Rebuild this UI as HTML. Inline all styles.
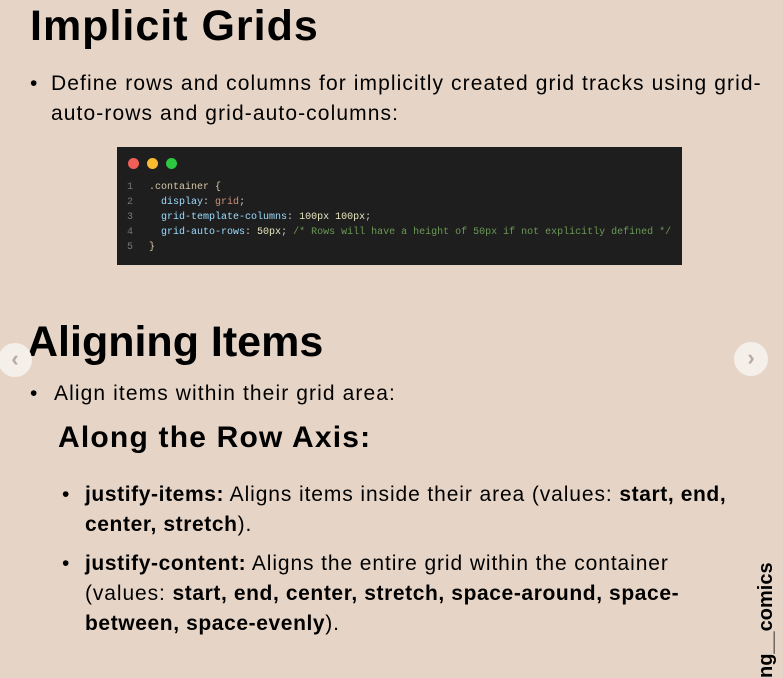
<!DOCTYPE html>
<html><head><meta charset="utf-8"><style>
body{margin:0;width:783px;height:676px;background:#e6d5c7;position:relative;overflow:hidden;font-family:"Liberation Sans",sans-serif;color:#000}
.a{position:absolute;white-space:nowrap}
h1{position:absolute;margin:0;font-size:43px;font-weight:bold}
.t{font-size:21px;line-height:30px;letter-spacing:1.1px}
.t b{letter-spacing:0.6px}
.code{position:absolute;left:117px;top:147px;width:565px;height:118px;background:#1e1e1e;font-family:"Liberation Mono",monospace;font-size:10px;color:#ccc;}
.code .l{position:absolute;left:10px;white-space:pre;line-height:15px}
.n{color:#777;display:inline-block;width:22px}
.btn{position:absolute;width:34px;height:34px;border-radius:50%;background:#f5efea;color:#b9aa9d;font-size:22px;text-align:center;line-height:32px;font-weight:bold}
</style></head><body>
<h1 style="left:30px;top:2px;letter-spacing:1px">Implicit Grids</h1>
<div class="a t" style="left:30px;top:69px">•</div>
<div class="a t" style="left:51px;top:69px">Define rows and columns for implicitly created grid tracks using grid-<br>auto-rows and grid-auto-columns:</div>
<div class="code">
<div style="position:absolute;left:11px;top:11px;width:11px;height:11px;border-radius:50%;background:#f25f58"></div>
<div style="position:absolute;left:30px;top:11px;width:11px;height:11px;border-radius:50%;background:#f9bc2e"></div>
<div style="position:absolute;left:49px;top:11px;width:11px;height:11px;border-radius:50%;background:#2bc840"></div>
<div class="l" style="top:33px"><span class="n">1</span><span style="color:#d7c8a8">.container {</span>
<span class="n">2</span>  <span style="color:#9cdcfe">display</span>: <span style="color:#ce9178">grid</span>;
<span class="n">3</span>  <span style="color:#9cdcfe">grid-template-columns</span>: <span style="color:#e8e8c0">100px 100px</span>;
<span class="n">4</span>  <span style="color:#9cdcfe">grid-auto-rows</span>: <span style="color:#e8e8c0">50px</span>; <span style="color:#6a9955">/* Rows will have a height of 50px if not explicitly defined */</span>
<span class="n">5</span><span style="color:#d7c8a8">}</span></div>
</div>
<h1 style="left:27px;top:318px">Aligning Items</h1>
<div class="a t" style="left:30px;top:379px">•</div>
<div class="a t" style="left:54px;top:379px">Align items within their grid area:</div>
<div class="a" style="left:58px;top:421px;font-size:30px;font-weight:bold;letter-spacing:1.2px">Along the Row Axis:</div>
<div class="a t" style="left:62px;top:480px">•</div>
<div class="a t" style="left:85px;top:480px;letter-spacing:0.9px"><b>justify-items:</b> Aligns items inside their area (values: <b>start, end,</b><br><b>center, stretch</b>).</div>
<div class="a t" style="left:62px;top:549px">•</div>
<div class="a t" style="left:85px;top:549px;letter-spacing:0.9px"><b>justify-content:</b> Aligns the entire grid within the container<br>(values: <b>start, end, center, stretch, space-around, space-</b><br><b>between, space-evenly</b>).</div>
<div class="btn" style="left:-2px;top:343px">‹</div>
<div class="btn" style="left:734px;top:342px">›</div>
<div class="a" style="left:756px;top:678px;transform:rotate(-90deg);transform-origin:0 0;font-size:20px;font-weight:bold;line-height:20px">ng__comics</div>
</body></html>
